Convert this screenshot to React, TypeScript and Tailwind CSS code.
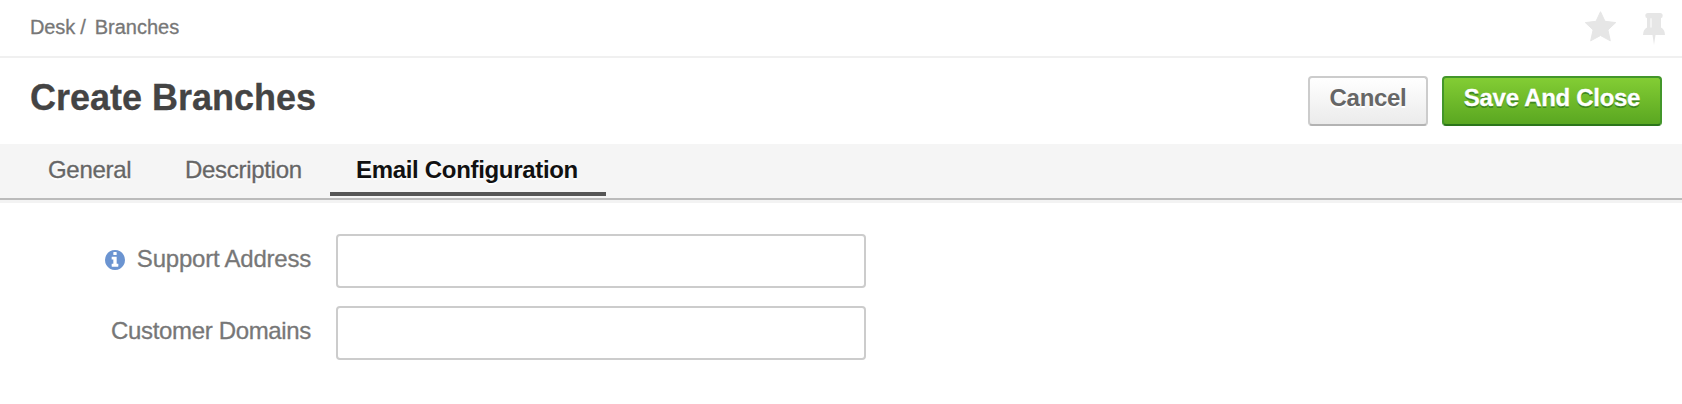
import React from "react";

function Field({ label, info = false }: { label: string; info?: boolean }) {
  return (
    <div className="flex h-[54px]">
      <label className="flex w-[311px] justify-end pt-[11px] text-[24px] leading-7 text-[#777777] [-webkit-text-stroke:0.3px_#777777]">
        {info && (
          <svg className="mt-[5px] mr-3 size-5" viewBox="0 0 1536 1536" fill="#6b94d1">
            <path d="M1024 1248v-160q0-14-9-23t-23-9h-96V544q0-14-9-23t-23-9H544q-14 0-23 9t-9 23v160q0 14 9 23t23 9h96v320h-96q-14 0-23 9t-9 23v160q0 14 9 23t23 9h448q14 0 23-9t9-23zM896 352V192q0-14-9-23t-23-9H672q-14 0-23 9t-9 23v160q0 14 9 23t23 9h192q14 0 23-9t9-23zM1536 768q0 209-103 385.500T1153.500 1433 768 1536 382.500 1433 103 1153.500 0 768 103 382.500 382.500 103 768 0t385.500 103T1433 382.500 1536 768z" />
          </svg>
        )}
        <span className={info ? "tracking-[-0.22px]" : "tracking-[-0.34px]"}>{label}</span>
      </label>
      <input className="ml-[25px] h-[54px] w-[530px] rounded-[4px] border-2 border-[#cccccc] bg-white px-3 text-2xl outline-none" aria-label={label} />
    </div>
  );
}

export default function App() {
  return (
    <main className="h-[404px] w-full bg-white font-['Liberation_Sans',Arial,sans-serif]">
      <header className="flex h-[58px] justify-between border-b-2 border-[#f0f0f0] pl-[30px]">
        <nav className="pt-4 text-[20px] leading-[22px] text-[#777777] [-webkit-text-stroke:0.3px_#777777]">
          <span className="tracking-[-0.1px]">Desk</span>
          <span className="ml-[5px]">/</span>
          <span className="ml-[9px]">Branches</span>
        </nav>
        <div className="flex pt-[11px] pr-[17px]">
          <svg className="h-[31px] w-8" viewBox="0 0 32 31" fill="#e6e6e6" stroke="#e6e6e6" strokeLinejoin="round">
            <path d="M15.500 0.700 20 10.300 30.700 11.600 22.900 18.900 25.300 29.800 15.500 24.500 5.700 29.800 8.100 18.900 0.300 11.600 11 10.300Z" />
          </svg>
          <svg className="mt-[2px] ml-[26px] h-8 w-[22px]" viewBox="0 0 22 32" fill="#e6e6e6">
            <path d="M5 0h12q2.700 0 2.700 2.500T18 5v9.500q4 2 4 7.500H12.500L11 32 9.500 22H0q0-5.500 4-7.500V5Q2.300 5 2.300 2.500T5 0Z" />
            <path d="M7.300 5.300h1.400v9.200H7.300z" fill="#f8f8f8" />
          </svg>
        </div>
      </header>
      <section className="flex h-[86px] justify-between pr-5 pl-[30px]">
        <h1 className="pt-5 text-[36px] leading-10 font-bold text-[#444444] [-webkit-text-stroke:0.3px_#444444]">Create Branches</h1>
        <div className="flex gap-[14px] pt-[18px]">
          <button className="h-[50px] w-[120px] rounded-[4px] border-2 border-[#cccccc] border-b-[#b3b3b3] bg-linear-to-b from-white to-[#ebebeb] pb-[6px] text-[24px] leading-7 font-bold tracking-[-0.3px] text-[#666666] [text-shadow:0_2px_0_#fff]">Cancel</button>
          <button className="h-[50px] w-[220px] rounded-[4px] border-2 border-[#43962a] border-b-[#2b751a] bg-linear-to-b from-[#83cd34] to-[#5aa721] pb-[6px] text-[24px] leading-7 font-bold tracking-[-0.3px] text-white [-webkit-text-stroke:0.3px_#fff] [text-shadow:0_2px_0_#3f8820]">Save And Close</button>
        </div>
      </section>
      <nav className="flex h-14 border-b-2 border-[#bbbbbb] bg-[#f5f5f5] pl-[20px] text-[24px] leading-7 text-[#666666] [text-shadow:0_2px_0_#fff]">
        <a className="h-[52px] w-[138px] pt-3 pl-7 tracking-[-0.3px] [-webkit-text-stroke:0.3px_#666666]">General</a>
        <a className="h-[52px] w-[172px] pt-3 pl-[27px] tracking-[-0.3px] [-webkit-text-stroke:0.3px_#666666]">Description</a>
        <a className="h-[52px] w-[276px] border-b-4 border-[#555555] pt-3 pl-[26px] font-bold tracking-[-0.32px] text-[#111111]">Email Configuration</a>
      </nav>
      <div className="h-[3px] bg-[#f3f3f3]" />
      <form className="flex flex-col gap-[18px] pt-[31px]">
        <Field label="Support Address" info />
        <Field label="Customer Domains" />
      </form>
    </main>
  );
}
